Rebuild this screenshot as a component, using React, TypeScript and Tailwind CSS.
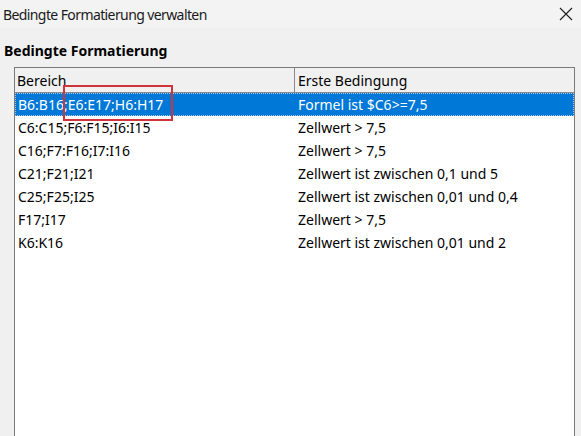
import React from "react";

const rows: [string, string][] = [
  ["B6:B16;E6:E17;H6:H17", "Formel ist $C6>=7,5"],
  ["C6:C15;F6:F15;I6:I15", "Zellwert > 7,5"],
  ["C16;F7:F16;I7:I16", "Zellwert > 7,5"],
  ["C21;F21;I21", "Zellwert ist zwischen 0,1 und 5"],
  ["C25;F25;I25", "Zellwert ist zwischen 0,01 und 0,4"],
  ["F17;I17", "Zellwert > 7,5"],
  ["K6:K16", "Zellwert ist zwischen 0,01 und 2"],
];

export default function App() {
  return (
    <div
      className="w-[581px] h-[436px] overflow-hidden bg-[#f0f0f0] text-[#000] relative"
      style={{ fontFamily: '"Noto Sans", "Open Sans", sans-serif' }}
    >
      <div className="h-[28px] flex items-center justify-between pl-[3px] pr-[6px] bg-[#f3f3f3]">
        <span className="text-[14px] tracking-[-0.6px] text-[#1a1a1a]">Bedingte Formatierung verwalten</span>
        <svg width="14" height="14" viewBox="0 0 14 14" className="mr-[2px]">
          <path d="M1 1 L13 13 M13 1 L1 13" stroke="#222" strokeWidth="1.2" />
        </svg>
      </div>
      <div className="pl-[4px] pt-[13px] text-[14px] font-bold leading-[20px]">Bedingte Formatierung</div>
      <div className="ml-[14px] mr-[6px] mt-[6px] h-[400px] border border-[#7a7a7a] bg-white">
        <div className="flex h-[25px] border-b border-[#8a8a8a] bg-[#f0f0f0] text-[14px]">
          <div className="w-[280px] border-r border-[#8a8a8a] pl-[2px] flex items-center">Bereich</div>
          <div className="flex-1 pl-[3px] flex items-center">Erste Bedingung</div>
        </div>
        {rows.map((r, i) => (
          <div
            key={i}
            className={
              i === 0
                ? "flex h-[23px] items-center text-[14px] bg-[#0078d7] text-white border border-dotted border-[#a9c4e0]"
                : "flex h-[23px] items-center text-[14px] border border-transparent"
            }
          >
            <div className="w-[279px] pl-[2px]">{r[0]}</div>
            <div className="flex-1 pl-[3px]">{r[1]}</div>
          </div>
        ))}
      </div>
      <div className="absolute left-[63px] top-[85px] w-[110px] h-[36px] border-2 border-[#d0343a]" />
    </div>
  );
}
